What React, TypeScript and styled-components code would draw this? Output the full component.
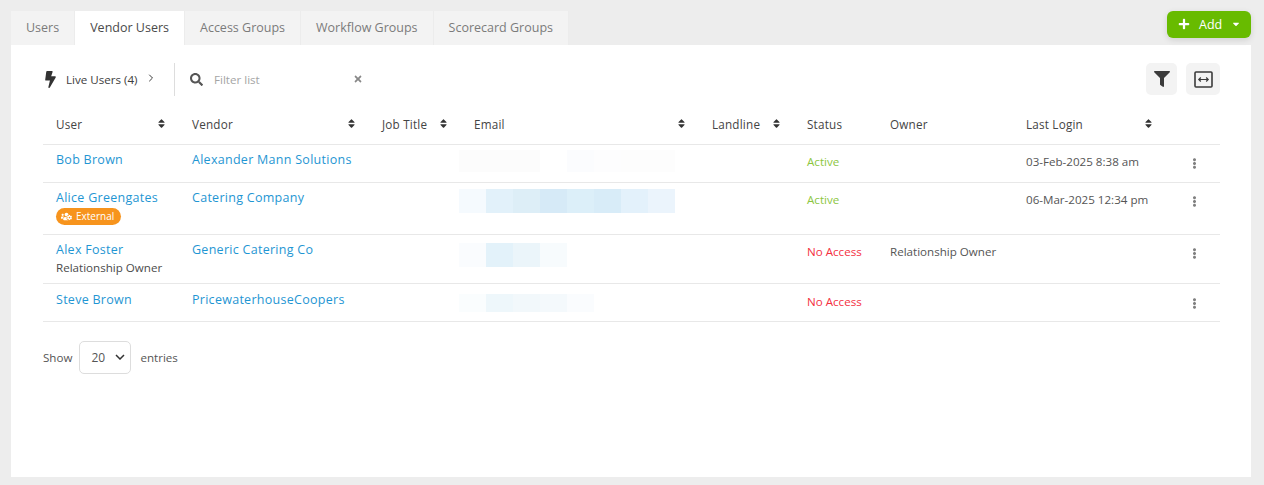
import styled, { createGlobalStyle } from "styled-components";
import { FaBolt, FaCaretDown, FaEllipsisV, FaFilter, FaPlus, FaSearch, FaSort, FaTimes, FaUsersCog } from "react-icons/fa";
import { FiChevronRight } from "react-icons/fi";

const Global = createGlobalStyle`
    html, body {
        margin: 0;
        height: 100%;
        background: #ededed;
        font-family: "Open Sans", "Liberation Sans", sans-serif;
        color: #444;
    }
    * { box-sizing: border-box; }
`;

const Page = styled.div`
    height: 485px;
    padding: 11px 13px 8px 11px;
    display: flex;
    flex-direction: column;
    overflow: hidden;
`;

const TopBar = styled.div`
    height: 34px;
    display: flex;
    justify-content: space-between;
    align-items: flex-start;
`;

const Tabs = styled.div`
    display: flex;
`;

const Tab = styled.div<{ $active?: boolean }>`
    height: 34px;
    padding: 0 15px 1px;
    display: flex;
    align-items: center;
    font-size: 12.5px;
    background: ${(p) => (p.$active ? "#fff" : "#f3f3f3")};
    color: ${(p) => (p.$active ? "#4a4a4a" : "#7b7b7b")};
    border-right: 1px solid #ececec;
`;

const AddButton = styled.button`
    width: 84px;
    height: 27px;
    border: none;
    border-radius: 6px;
    background: #68bb00;
    color: #fff;
    font: 500 12.5px "Open Sans", sans-serif;
    display: flex;
    align-items: center;
    padding: 0 0 1px 11px;
    box-shadow: 0 2px 6px rgba(0, 0, 0, 0.12);
    position: relative;
    z-index: 1;

    span {
        margin: 0 9px 0 9px;
    }
`;

const Panel = styled.div`
    flex: 1;
    background: #fff;
    padding: 17px 31px 0 32px;
`;

const Toolbar = styled.div`
    height: 34px;
    display: flex;
    align-items: center;
`;

const LiveUsers = styled.div`
    width: 132px;
    height: 33px;
    display: flex;
    align-items: center;
    font-size: 11.6px;
    color: #3d3d3d;
    border-right: 1px solid #ddd;

    svg:first-child {
        margin-left: -1px;
    }

    svg:last-child {
        margin-top: -3px;
    }

    span {
        margin: 0 7px;
    }
`;

const Search = styled.div`
    display: flex;
    align-items: center;
    padding-left: 15px;
    width: 188px;
    color: #555;
`;

const FilterText = styled.span`
    flex: 1;
    margin-left: 11px;
    font-size: 11.6px;
    color: #a5a5a5;
`;

const ToolButtons = styled.div`
    margin-left: auto;
    display: flex;
    gap: 9px;
`;

const ToolButton = styled.div<{ $wide?: boolean }>`
    width: ${(p) => (p.$wide ? 34 : 31)}px;
    height: 32px;
    border-radius: 5px;
    background: #f3f3f3;
    color: #3b3b3b;
    display: flex;
    align-items: center;
    justify-content: center;
`;

const Table = styled.table`
    width: 1177px;
    margin-top: 9px;
    border-collapse: collapse;
    table-layout: fixed;
`;

const Th = styled.th`
    height: 39px;
    padding: 0 0 0 13px;
    text-align: left;
    font-size: 11.7px;
    font-weight: 500;
    letter-spacing: 0.2px;
    color: #444;
    border-bottom: 1px solid #e8e8e8;
`;

const HeadInner = styled.div`
    display: flex;
    align-items: center;
    justify-content: space-between;
    padding-right: 12px;

    svg {
        color: #333;
        margin-top: -2px;
    }
`;

const Tr = styled.tr<{ $height: number; $pad: number }>`
    height: ${(p) => p.$height}px;

    & > td {
        padding-top: ${(p) => p.$pad}px;
    }
`;

const Td = styled.td`
    padding: 6px 0 0 13px;
    vertical-align: top;
    font-size: 11.6px;
    line-height: 17px;
    color: #555;
    border-bottom: 1px solid #e8e8e8;
    white-space: nowrap;
`;

const NameLink = styled.div`
    font-size: 12.5px;
    font-weight: 500;
    letter-spacing: 0.28px;
    color: #1f96d3;
`;

const SubText = styled.div`
    color: #4b4b4b;
    margin-top: 1px;
`;

const Badge = styled.div`
    display: inline-flex;
    align-items: center;
    gap: 4px;
    height: 17px;
    width: 65px;
    margin-top: 2px;
    padding-left: 5px;
    border-radius: 9px;
    background: #f7941d;
    color: #fff;
    font-size: 10px;
    font-weight: 500;
`;

const Status = styled.div<{ $ok?: boolean }>`
    margin-top: 2px;
    color: ${(p) => (p.$ok ? "#8cc63f" : "#f4303f")};
`;

const CellText = styled.div`
    margin-top: 2px;
    color: #555;
`;

const ActionCell = styled(Td)`
    text-align: left;
    padding-left: 0;
    color: #808080;
`;

const Dots = styled.div`
    margin: 7px 0 0 23px;
    line-height: 0;
`;

const Mosaic = styled.div<{ $top: number; $left: number; $size: number }>`
    display: flex;
    height: ${(p) => p.$size}px;
    margin-top: ${(p) => p.$top}px;
    margin-left: ${(p) => p.$left}px;
`;

const Tile = styled.div<{ $color: string }>`
    width: 27px;
    height: 100%;
    background: ${(p) => p.$color};
`;

const Footer = styled.div`
    margin-top: 19px;
    display: flex;
    align-items: center;
    font-size: 11.6px;
    color: #555;
`;

const PageSize = styled.div`
    width: 52px;
    height: 33px;
    margin: 0 9px 0 7px;
    border: 1px solid #ddd;
    border-radius: 5px;
    display: flex;
    align-items: center;
    justify-content: space-between;
    padding: 0 5px 0 11px;
    font-size: 12px;

    svg {
        color: #333;
    }
`;

const Chevron = () => (
    <svg width="10" height="6" viewBox="0 0 10 6">
        <path d="M1 1l4 4 4-4" fill="none" stroke="currentColor" strokeWidth="1.5" />
    </svg>
);

const ExpandIcon = () => (
    <svg width="19" height="17" viewBox="0 0 19 17">
        <rect x="1" y="1" width="17" height="15" rx="1" fill="none" stroke="currentColor" strokeWidth="1.6" />
        <path d="M5 8.5h9M6.8 6.5l-2 2 2 2M12.2 6.5l2 2-2 2" fill="none" stroke="currentColor" strokeWidth="1.2" />
    </svg>
);

const columns = [
    { label: "User", width: 136, sort: true },
    { label: "Vendor", width: 190, sort: true },
    { label: "Job Title", width: 92, sort: true },
    { label: "Email", width: 238, sort: true },
    { label: "Landline", width: 95, sort: true },
    { label: "Status", width: 83 },
    { label: "Owner", width: 136 },
    { label: "Last Login", width: 153, sort: true },
    { label: "", width: 54 },
];

const rows = [
    {
        name: "Bob Brown",
        vendor: "Alexander Mann Solutions",
        height: 38,
        pad: 6,
        tiles: ["#fcfcfc", "#fcfcfc", "#fcfcfc", "#fff", "#fbfcfe", "#fdfdfe", "#fdfdfd", "#fdfdfd"],
        mosaic: { top: -1, left: -15, size: 22 },
        status: "Active",
        login: "03-Feb-2025 8:38 am",
    },
    {
        name: "Alice Greengates",
        vendor: "Catering Company",
        height: 52,
        pad: 6,
        external: true,
        tiles: ["#f5fafe", "#e2f1fa", "#ddeef7", "#d6eaf7", "#dceff9", "#d8ecf8", "#e3f1fb", "#ebf4fc"],
        mosaic: { top: 0, left: -15, size: 24 },
        status: "Active",
        login: "06-Mar-2025 12:34 pm",
    },
    {
        name: "Alex Foster",
        vendor: "Generic Catering Co",
        height: 49,
        pad: 6,
        sub: "Relationship Owner",
        tiles: ["#fafcfe", "#e3f2fa", "#ebf5fa", "#f7fbfd"],
        mosaic: { top: 2, left: -15, size: 24 },
        status: "No Access",
        owner: "Relationship Owner",
    },
    {
        name: "Steve Brown",
        vendor: "PricewaterhouseCoopers",
        height: 38,
        pad: 7,
        tiles: ["#fafdfe", "#eef7fb", "#f2f8fb", "#f4f9fc", "#fafcfe"],
        mosaic: { top: 3, left: -15, size: 18 },
        status: "No Access",
    },
];

const App = () => {
    return (
        <Page>
            <Global />
            <TopBar>
                <Tabs>
                    <Tab>Users</Tab>
                    <Tab $active>Vendor Users</Tab>
                    <Tab>Access Groups</Tab>
                    <Tab>Workflow Groups</Tab>
                    <Tab>Scorecard Groups</Tab>
                </Tabs>
                <AddButton>
                    <FaPlus size={12} />
                    <span>Add</span>
                    <FaCaretDown size={10} />
                </AddButton>
            </TopBar>
            <Panel>
                <Toolbar>
                    <LiveUsers>
                        <FaBolt size={17} color="#333" />
                        <span>Live Users (4)</span>
                        <FiChevronRight size={12} />
                    </LiveUsers>
                    <Search>
                        <FaSearch size={13} />
                        <FilterText>Filter list</FilterText>
                        <FaTimes size={10} color="#888" />
                    </Search>
                    <ToolButtons>
                        <ToolButton>
                            <FaFilter size={16} />
                        </ToolButton>
                        <ToolButton $wide>
                            <ExpandIcon />
                        </ToolButton>
                    </ToolButtons>
                </Toolbar>
                <Table>
                    <colgroup>
                        {columns.map((c, i) => (
                            <col key={i} width={c.width} />
                        ))}
                    </colgroup>
                    <thead>
                        <tr>
                            {columns.map((c, i) => (
                                <Th key={i}>
                                    <HeadInner>
                                        {c.label}
                                        {c.sort && <FaSort size={11} />}
                                    </HeadInner>
                                </Th>
                            ))}
                        </tr>
                    </thead>
                    <tbody>
                        {rows.map((r) => (
                            <Tr key={r.name} $height={r.height} $pad={r.pad}>
                                <Td>
                                    <NameLink>{r.name}</NameLink>
                                    {r.external && (
                                        <Badge>
                                            <FaUsersCog size={11} />
                                            External
                                        </Badge>
                                    )}
                                    {r.sub && <SubText>{r.sub}</SubText>}
                                </Td>
                                <Td>
                                    <NameLink>{r.vendor}</NameLink>
                                </Td>
                                <Td />
                                <Td>
                                    <Mosaic $top={r.mosaic.top} $left={r.mosaic.left} $size={r.mosaic.size}>
                                        {r.tiles.map((t, i) => (
                                            <Tile key={i} $color={t} />
                                        ))}
                                    </Mosaic>
                                </Td>
                                <Td />
                                <Td>
                                    <Status $ok={r.status === "Active"}>{r.status}</Status>
                                </Td>
                                <Td>
                                    <CellText>{r.owner}</CellText>
                                </Td>
                                <Td>
                                    <CellText>{r.login}</CellText>
                                </Td>
                                <ActionCell>
                                    <Dots>
                                        <FaEllipsisV size={11} />
                                    </Dots>
                                </ActionCell>
                            </Tr>
                        ))}
                    </tbody>
                </Table>
                <Footer>
                    Show
                    <PageSize>
                        20
                        <Chevron />
                    </PageSize>
                    entries
                </Footer>
            </Panel>
        </Page>
    );
};

export default App;
